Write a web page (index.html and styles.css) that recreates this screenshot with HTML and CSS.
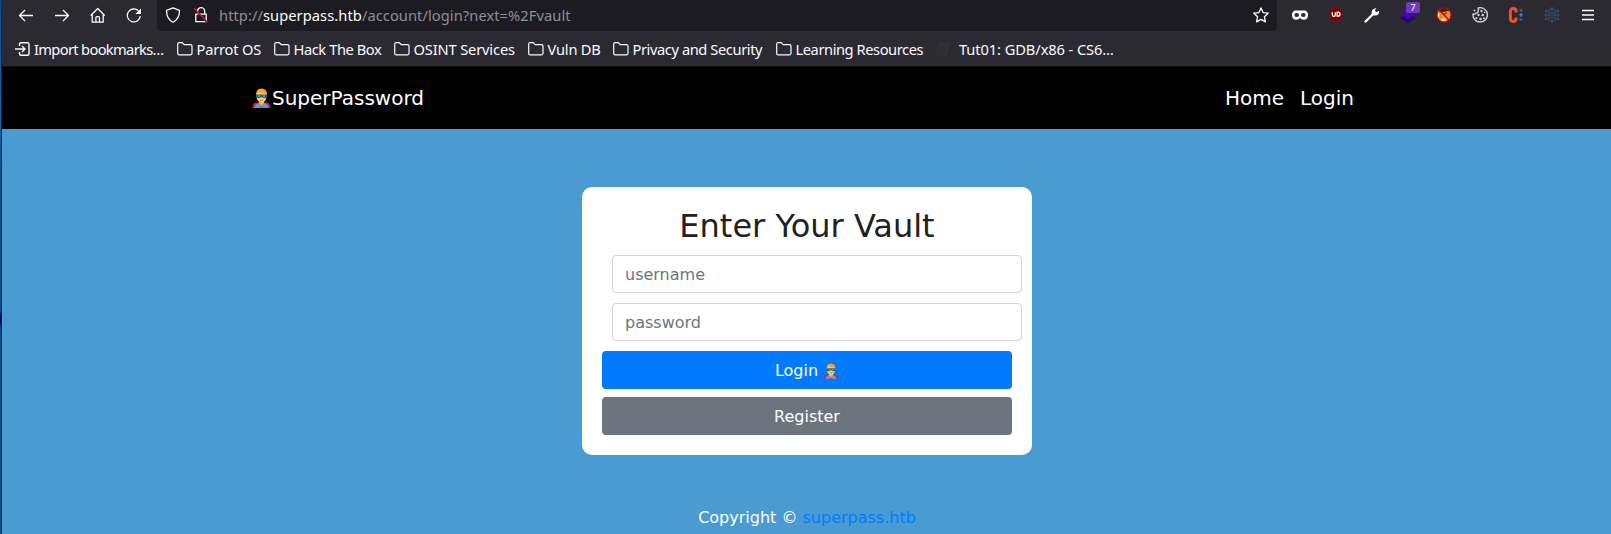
FILE: index.html
```html
<!DOCTYPE html>
<html lang="en">
<head>
<meta charset="utf-8">
<title>SuperPassword</title>
<link rel="stylesheet" href="styles.css">
</head>
<body>
<svg class="defs" width="0" height="0" aria-hidden="true">
  <symbol id="folder" viewBox="0 0 16 14"><path d="M.7 11.3V2.2Q.7.7 2.2.7h3l2 2h6.3q1.5 0 1.500 1.500v7.100q0 1.500-1.500 1.500H2.200Q.7 12.800.7 11.300z" fill="none" stroke="#fbfbfe" stroke-width="1.200"/></symbol>
  <symbol id="hero" viewBox="0 0 18 20">
    <path d="M0 20q0-5 4-5.500h10q4 .5 4 5.500z" fill="#c8204f"/>
    <path d="M2 20q.5-4.500 5-5h4q4.500.5 5 5z" fill="#5c9ede"/>
    <path d="M6.500 12h5v3.500L9 17.500l-2.500-2z" fill="#eeb83c"/>
    <path d="M5.500 18.800h7L9 20z" fill="#e8314f"/>
    <ellipse cx="9" cy="8" rx="5" ry="6.800" fill="#fdcf4c"/>
    <path d="M3.500 8Q2.800 1 9 .6q6.200.4 5.500 7.400l-1.300-2.800Q8 5.500 6 3.800L4.500 6z" fill="#ff9d28"/>
    <path d="M3.600 6.500h10.800v2.200q-.8 1.800-3.500 1.400L9 8.900l-1.900 1.200q-2.700.4-3.500-1.400z" fill="#176691"/>
    <path d="M5.600 8h2m2.800 0h2" stroke="#72c8e8" stroke-width=".9"/>
    <path d="M7.500 12.200h3" stroke="#b96529" stroke-width=".8"/>
  </symbol>
</svg>
<div class="window">
  <div class="chrome">
    <div class="toolbar">
      <div class="nav-buttons">
        <svg viewBox="0 0 16 16"><path d="M15 8.500H1.500M7 3L1.500 8.500 7 14"/></svg>
        <svg viewBox="0 0 16 16"><path d="M1 8.500h13.500M9 3L14.500 8.500 9 14"/></svg>
        <svg viewBox="0 0 16 16"><path d="M.7 8.500L7.700 1.500l7 7M2.200 7.500v7.700h11V7.500M5.900 15v-4.300q0-1 1-1h1.600q1 0 1 1V15"/></svg>
        <svg viewBox="0 0 16 16"><path d="M14.300 9.200a6.500 6.500 0 1 1-1.900-5.400"/><path d="M15 1.500v5.600H9.400z" fill="#fbfbfe" stroke="none"/></svg>
      </div>
      <div class="urlbar">
        <svg class="shield" viewBox="0 0 16 16"><path d="M8 .8l6.400 2.500q.4 8.200-6.400 12Q1.200 11.500 1.600 3.300z"/></svg>
        <svg class="lock" viewBox="0 0 16 16"><path d="M4.500 7V4.300a3.600 3.600 0 0 1 7.200 0V7M2.800 7.200h10.400v7.500H2.800z"/><path d="M1.200 2.200l13.600 14" stroke="#1c1b22" stroke-width="1.400"/><path d="M1.200 1.400l13.600 14" stroke="#e9123f" stroke-width="1.300"/></svg>
        <span class="url">http://<b>superpass.htb</b>/account/login?next=%2Fvault</span>
        <svg class="star" viewBox="0 0 16 16"><path d="M8 .9l2.100 4.700 5.100.6-3.800 3.500 1 5.200L8 12.400l-4.400 2.500 1-5.200L.8 6.200l5.100-.6z"/></svg>
      </div>
      <div class="extensions">
        <svg viewBox="0 0 16 16"><path d="M0 8q0-4.600 4-4.600h8q4 0 4 4.600 0 4.800-4.200 4.800Q9.300 12.800 8 11q-1.300 1.800-3.800 1.800Q0 12.800 0 8z" fill="#fbfbfe" stroke="none"/><ellipse cx="4.700" cy="8" rx="2.300" ry="1.900" fill="#2b2a33" stroke="none"/><ellipse cx="11.300" cy="8" rx="2.300" ry="1.900" fill="#2b2a33" stroke="none"/></svg>
        <svg viewBox="0 0 16 16"><path d="M8 .4q3 1.900 6.700 1.900v5.500Q14.200 13 8 15.700 1.800 13 1.300 7.800V2.300Q5 2.300 8 .4z" fill="#800000" stroke="#68252d" stroke-width=".6"/><path d="M4.300 5.200v2.700q0 1.400 1.500 1.400t1.500-1.400V5.200m1.800 0v4h1q1.900 0 1.900-2t-1.900-2z" stroke="#fff"/></svg>
        <svg viewBox="0 0 16 16"><path d="M1.600 14.500l8-8" stroke="#fbfbfe" stroke-width="2.400" stroke-linecap="round"/><path d="M12.500.9L10.800 3.600l1.500 1.700 2.800-1.500q.3 4-3 4.700-2 .4-3.300-.6l-1-1Q6.500 1.800 12.500.9z" fill="#fbfbfe" stroke="none"/></svg>
        <span class="ext-badged">
          <svg viewBox="0 0 16 16"><path d="M0 11L8 6l8 5-8 5z" fill="#240078" stroke="none"/><path d="M0 7.500L8 2l8 5.500-8 5z" fill="#4807a5" stroke="none"/></svg>
          <span class="badge">7</span>
        </span>
        <svg viewBox="0 0 16 16"><path d="M1.500 3L5 5.500 14 3.500l1 4.500-1 4-5 3-5-1-3-5z" fill="#f08a24" stroke="none"/><path d="M1 5l2 1 1 3-2 1zM5 12l3-1 2 1-1 2-3 .5z" fill="#f7d9bb" stroke="none"/><path d="M7 6.500l3-1.500 1 2-3 1z" fill="#924917" stroke="none"/><circle cx="8" cy="8" r="7.200" stroke="#b5090d" stroke-width="1.300"/><path d="M3 3l10 10" stroke="#b5090d" stroke-width="1.300"/></svg>
        <svg viewBox="0 0 16 16"><path d="M6 1a7.200 7.200 0 1 1-5 6q2 1 3-1 2.500.2 2-2 1-1.500 0-3z" stroke="#d0d0d3" stroke-width="1.400"/><g fill="#d0d0d3" stroke="none"><circle cx="9.500" cy="4" r="1.200"/><circle cx="6.500" cy="8" r="1.200"/><circle cx="10.700" cy="8" r="1.300"/><circle cx="4.400" cy="11" r="1.100"/><circle cx="8.500" cy="12" r="1.300"/><circle cx="12.600" cy="5.500" r=".8"/><circle cx="12" cy="11.300" r="1"/><circle cx="2.500" cy="3.500" r=".9"/></g></svg>
        <svg viewBox="0 0 16 16"><path d="M8 5.500V4.200Q8 1.600 5.200 1.600T2.400 4.200v7.600q0 2.600 2.800 2.600T8 11.800v-1.300" stroke="#f0502a" stroke-width="3"/><circle cx="13" cy="3.500" r="1.600" fill="#555460" stroke="none"/><circle cx="13" cy="8" r="1.700" fill="#1688e8" stroke="none"/><circle cx="13" cy="12.500" r="1.600" fill="#555460" stroke="none"/></svg>
        <svg viewBox="0 0 16 16"><g stroke="#354a61" stroke-width=".8"><path d="M8 1l6 3v8l-6 3-6-3V4zM2 4l6 2 6-2M2 12l6-2 6 2M1 8h14M8 1v14M8 1L5 5v6l3 4 3-4V5z"/></g><g fill="#354a61" stroke="none"><circle cx="8" cy="1.300" r="1.200"/><circle cx="8" cy="14.700" r="1.200"/><circle cx="2" cy="4" r="1.200"/><circle cx="14" cy="4" r="1.200"/><circle cx="2" cy="12" r="1.200"/><circle cx="14" cy="12" r="1.200"/><circle cx="1.500" cy="8" r="1"/><circle cx="14.500" cy="8" r="1"/><circle cx="5" cy="8" r="1"/><circle cx="11" cy="8" r="1"/></g></svg>
        <svg viewBox="0 0 16 16"><path d="M2 3.500h12M2 8h12M2 12.500h12"/></svg>
      </div>
    </div>
    <div class="bookmarks">
      <span class="bm import"><svg viewBox="0 0 16 14"><path d="M4.500 4V2.200Q4.500.7 6 .7h6.500q1.500 0 1.500 1.500v9.600q0 1.500-1.500 1.500H6q-1.500 0-1.500-1.500V10M0 7h9.500M7 4l3 3-3 3" fill="none" stroke="#fbfbfe" stroke-width="1.400"/></svg>Import bookmarks…</span>
      <span class="bm parrot"><svg><use href="#folder"/></svg>Parrot OS</span>
      <span class="bm hack"><svg><use href="#folder"/></svg>Hack The Box</span>
      <span class="bm osint"><svg><use href="#folder"/></svg>OSINT Services</span>
      <span class="bm vuln"><svg><use href="#folder"/></svg>Vuln DB</span>
      <span class="bm privacy"><svg><use href="#folder"/></svg>Privacy and Security</span>
      <span class="bm learning"><svg><use href="#folder"/></svg>Learning Resources</span>
      <span class="bm tut"><svg viewBox="0 0 16 14"><path d="M4.500.5H15L12 13.500H2Q.5 13 1 11z" fill="#343434"/><path d="M6 3h6l-2 7H4zM6 6h4" fill="none" stroke="#2b2b2e"/></svg>Tut01: GDB/x86 - CS6…</span>
    </div>
  </div>
  <header class="site-nav">
    <a class="brand"><svg><use href="#hero"/></svg>SuperPassword</a>
    <nav><a>Home</a><a>Login</a></nav>
  </header>
  <main>
    <form class="card">
      <h1>Enter Your Vault</h1>
      <input type="text" placeholder="username">
      <input type="password" placeholder="password">
      <button type="button" class="btn primary">Login <svg><use href="#hero"/></svg></button>
      <button type="button" class="btn secondary">Register</button>
    </form>
    <footer>Copyright © <a>superpass.htb</a></footer>
  </main>
</div>
</body>
</html>
```
FILE: styles.css
```css
* { box-sizing: border-box; }
html, body { margin: 0; height: 100%; overflow: hidden; }
html { background: linear-gradient(#08509a, #1a63a5 128px, #0b4c8b 180px, #0b4c8b 310px, #06066e 316px, #06066e 322px, #0b4c8b 328px); }
body { font: 16px/24px "DejaVu Sans", sans-serif; }
svg { display: block; flex: none; }
.defs { position: absolute; }
.window {
  height: 534px;
  border-left: 1px solid #10253c;
  margin-left: 1px;
}

.chrome {
  height: 67px;
  background: #2b2a33;
  border-bottom: 1px solid #0f0f12;
  color: #fbfbfe;
  font-family: "Noto Sans", sans-serif;
  font-size: 14.67px;
}
.toolbar { display: flex; height: 31px; }
.toolbar svg { width: 16px; height: 16px; fill: none; stroke: #fbfbfe; stroke-width: 1.3; stroke-linejoin: round; }
.nav-buttons { display: flex; align-items: center; gap: 20px; width: 155px; padding: 0 0 1px 16px; }
.urlbar {
  display: flex;
  align-items: center;
  width: 1120px;
  padding: 0 8px 1px;
  background: #1c1b22;
  border-radius: 0 0 4px 4px;
}
.urlbar .lock { margin: 0 10px 0 12px; }
.url { flex: 1; color: #8f8f96; white-space: nowrap; letter-spacing: .07px; }
.url b { color: #fbfbfe; font-weight: 400; }
.extensions { display: flex; align-items: center; gap: 20px; padding: 0 0 1px 15px; }
.ext-badged { position: relative; }
.badge {
  position: absolute;
  left: 6px;
  top: -5px;
  width: 14px;
  height: 11px;
  border-radius: 2px;
  background: #6b3cbf;
  font-size: 9.5px;
  line-height: 11px;
  text-align: center;
}
.bookmarks { display: flex; align-items: center; height: 35px; padding: 1px 0 0 13px; }
.bm { display: flex; align-items: center; gap: 3.5px; white-space: nowrap; }
.bm svg { width: 16px; height: 14px; }
.import { width: 162px; gap: 3px; letter-spacing: -.66px; }
.parrot { width: 97px; letter-spacing: -.2px; }
.hack { width: 120px; letter-spacing: -.42px; }
.osint { width: 134px; letter-spacing: -.15px; }
.vuln { width: 85px; letter-spacing: -.2px; }
.privacy { width: 163px; letter-spacing: -.41px; }
.learning { width: 159px; letter-spacing: -.43px; }
.tut { gap: 8px; letter-spacing: -.09px; }

.site-nav {
  display: flex;
  justify-content: space-between;
  align-items: center;
  height: 62px;
  padding: 0 257px 0 250px;
  background: #000;
  color: #fff;
  font-size: 20px;
}
.brand { display: flex; align-items: center; }
.brand svg { width: 19px; height: 20px; margin-right: 1px; }
.site-nav nav { display: flex; gap: 16px; }

main {
  display: flex;
  flex-direction: column;
  align-items: center;
  height: 405px;
  padding: 58px 0 0 1px;
  background: #4b9bd3;
}
.card {
  width: 450px;
  height: 268px;
  padding: 20px;
  border-radius: 10px;
  background: #fff;
  margin: 0;
}
h1 { margin: 0 0 9px; font-size: 32px; line-height: 39px; font-weight: 400; text-align: center; color: #212121; }
input, .btn { display: block; width: 410px; height: 38px; border-radius: 4px; font: inherit; }
input { margin: 0 0 10px 10px; padding: 6px 12px; border: 1px solid #ced4da; background: #fff; }
input::placeholder { color: #6c757d; opacity: 1; }
.btn { display: flex; align-items: center; justify-content: center; padding: 1px 0 0; border: 0; color: #fff; }
.btn svg { width: 16px; height: 16px; margin-left: 5px; }
.primary { margin-bottom: 8px; background: #007bff; }
.secondary { background: #6c757d; }
footer { margin-top: 51px; color: #fff; }
footer a { color: #007bff; }
```
